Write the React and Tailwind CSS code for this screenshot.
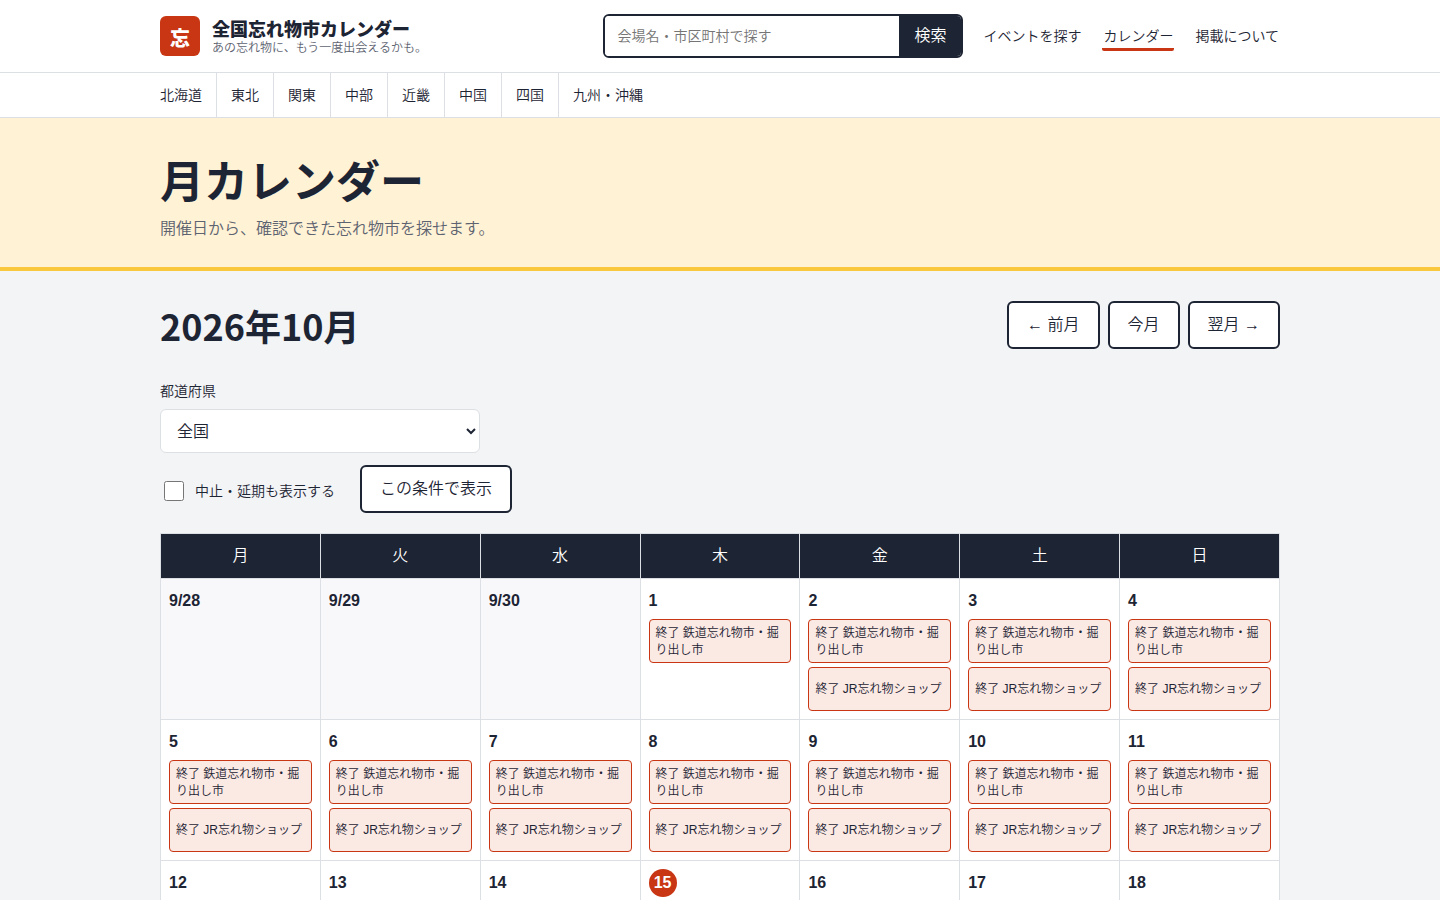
import { clsx } from 'clsx'

const regions = ['北海道', '東北', '関東', '中部', '近畿', '中国', '四国', '九州・沖縄']

const navLinks = [
  { label: 'イベントを探す', href: '#events' },
  { label: 'カレンダー', href: '#calendar', active: true },
  { label: '掲載について', href: '#about' },
]

const weekdays = ['月', '火', '水', '木', '金', '土', '日']

const RAILWAY = '鉄道忘れ物市・掘り出し市'
const JR_SHOP = 'JR忘れ物ショップ'
const TODAY = 15

const buildDays = () => {
  const days = ['9/28', '9/29', '9/30'].map((label) => ({ label, outside: true, events: [] }))
  for (let d = 1; d <= 31; d++) {
    days.push({
      label: String(d),
      today: d === TODAY,
      ended: d < TODAY,
      events: d === 1 ? [RAILWAY] : [RAILWAY, JR_SHOP],
    })
  }
  days.push({ label: '11/1', outside: true, events: [] })
  return days
}

const days = buildDays()
const weeks = Array.from({ length: days.length / 7 }, (_, i) => days.slice(i * 7, i * 7 + 7))

const Container = ({ className, children }) => (
  <div className={clsx('mx-auto w-full max-w-[1152px] px-4', className)}>{children}</div>
)

const OutlineButton = ({ children, type = 'button' }) => (
  <button
    type={type}
    className="h-12 rounded-md border-2 border-[#1d2433] bg-white px-[18px] text-base whitespace-nowrap"
  >
    {children}
  </button>
)

const Header = () => (
  <header className="border-b border-[#dcdfe4] bg-white">
    <Container className="flex h-[72px] items-center justify-between gap-5">
      <a href="#top" className="flex items-center gap-3">
        <span className="flex h-10 w-10 items-center justify-center rounded-md bg-[#c83614] pt-1 font-['Noto_Sans_CJK_JP',sans-serif] text-xl font-black text-white">
          忘
        </span>
        <span className="flex flex-col gap-0.5 pt-0.5">
          <span className="font-['Noto_Sans_CJK_JP',sans-serif] text-lg leading-5 font-black">
            全国忘れ物市カレンダー
          </span>
          <span className="text-xs leading-4 text-[#5d6370]">あの忘れ物に、もう一度出会えるかも。</span>
        </span>
      </a>

      <div className="flex items-center gap-[19px]">
        <form role="search" className="flex h-11 w-[360px] overflow-hidden rounded-md border-2 border-[#1d2433]">
          <input
            type="search"
            aria-label="会場名・市区町村で探す"
            placeholder="会場名・市区町村で探す"
            className="min-w-0 flex-1 bg-white px-3 text-sm placeholder:text-[#757575] focus:outline-none"
          />
          <button type="submit" className="w-[62px] bg-[#1d2433] text-base text-white">
            検索
          </button>
        </form>
        <nav className="flex gap-5 text-sm">
          {navLinks.map((link) => (
            <a
              key={link.label}
              href={link.href}
              aria-current={link.active ? 'page' : undefined}
              className={clsx(
                'border-b-3 px-px pt-0.5 leading-6 whitespace-nowrap',
                link.active ? 'rounded-xs border-[#c83614]' : 'border-transparent',
              )}
            >
              {link.label}
            </a>
          ))}
        </nav>
      </div>
    </Container>
  </header>
)

const RegionNav = () => (
  <nav aria-label="地域" className="border-b border-[#dcdfe4] bg-white">
    <Container className="flex h-11 text-sm">
      {regions.map((region) => (
        <a
          key={region}
          href="#region"
          className="flex items-center border-r border-[#dcdfe4] px-3.5 first:pl-0 last:border-r-0"
        >
          {region}
        </a>
      ))}
    </Container>
  </nav>
)

const EventLink = ({ name, ended }) => (
  <a
    href="#event"
    className="flex min-h-11 items-center rounded-sm border border-[#c83614] bg-[#fbe9e4] px-1.5 pt-px text-xs leading-[17px]"
  >
    {ended ? `終了 ${name}` : name}
  </a>
)

const DayCell = ({ day }) => (
  <td className={clsx('border border-[#dcdfe4] p-2 align-top', day.outside ? 'bg-[#f8f8fb]' : 'bg-white')}>
    <div className="flex min-h-[124px] flex-col gap-1">
      <span
        className={clsx(
          'flex h-7 items-center font-bold',
          day.today && 'w-7 justify-center rounded-full bg-[#c83614] text-white',
        )}
      >
        {day.label}
      </span>
      {day.events.map((name) => (
        <EventLink key={name} name={name} ended={day.ended} />
      ))}
    </div>
  </td>
)

const App = () => (
  <div
    lang="ja"
    className="min-h-screen bg-[#f2f4f6] font-['Liberation_Sans','Noto_Sans_CJK_JP_DemiLight','Noto_Sans_CJK_JP',sans-serif] text-[#1d2433]"
  >
    <Header />
    <RegionNav />

    <section className="border-b-4 border-[#fac83c] bg-[#fff2d5]">
      <Container className="pt-[29px] pb-6">
        <h1 className="font-['Noto_Sans_CJK_JP',sans-serif] text-[44px] leading-16 font-bold">月カレンダー</h1>
        <p className="mt-1 leading-7 text-[#5d6370]">開催日から、確認できた忘れ物市を探せます。</p>
      </Container>
    </section>

    <main>
      <Container className="pt-[30px] pb-12">
        <div className="flex items-center justify-between">
          <h2 className="font-['Noto_Sans_CJK_JP',sans-serif] text-4xl leading-12 font-bold">2026年10月</h2>
          <div className="flex gap-2">
            <OutlineButton>← 前月</OutlineButton>
            <OutlineButton>今月</OutlineButton>
            <OutlineButton>翌月 →</OutlineButton>
          </div>
        </div>

        <form className="mt-[30px] flex flex-col gap-3">
          <div className="flex flex-col">
            <label htmlFor="prefecture" className="mb-1.5 text-sm leading-6">
              都道府県
            </label>
            <select
              id="prefecture"
              className="h-11 w-80 rounded-md border border-[#dcdfe4] bg-white px-3 text-base"
            >
              <option>全国</option>
              <option>北海道</option>
              <option>東京都</option>
              <option>大阪府</option>
            </select>
          </div>
          <div className="flex items-center gap-[25px]">
            <label className="flex items-center gap-[11px] pt-1 pl-1 text-sm">
              <input type="checkbox" className="h-5 w-5" />
              中止・延期も表示する
            </label>
            <OutlineButton type="submit">この条件で表示</OutlineButton>
          </div>
        </form>

        <table className="mt-5 w-full table-fixed border-collapse">
          <thead>
            <tr>
              {weekdays.map((day) => (
                <th
                  key={day}
                  scope="col"
                  className="h-[45px] border border-[#dcdfe4] bg-[#1d2433] text-center font-normal text-white"
                >
                  {day}
                </th>
              ))}
            </tr>
          </thead>
          <tbody>
            {weeks.map((week) => (
              <tr key={week[0].label}>
                {week.map((day) => (
                  <DayCell key={day.label} day={day} />
                ))}
              </tr>
            ))}
          </tbody>
        </table>
      </Container>
    </main>
  </div>
)

export default App
